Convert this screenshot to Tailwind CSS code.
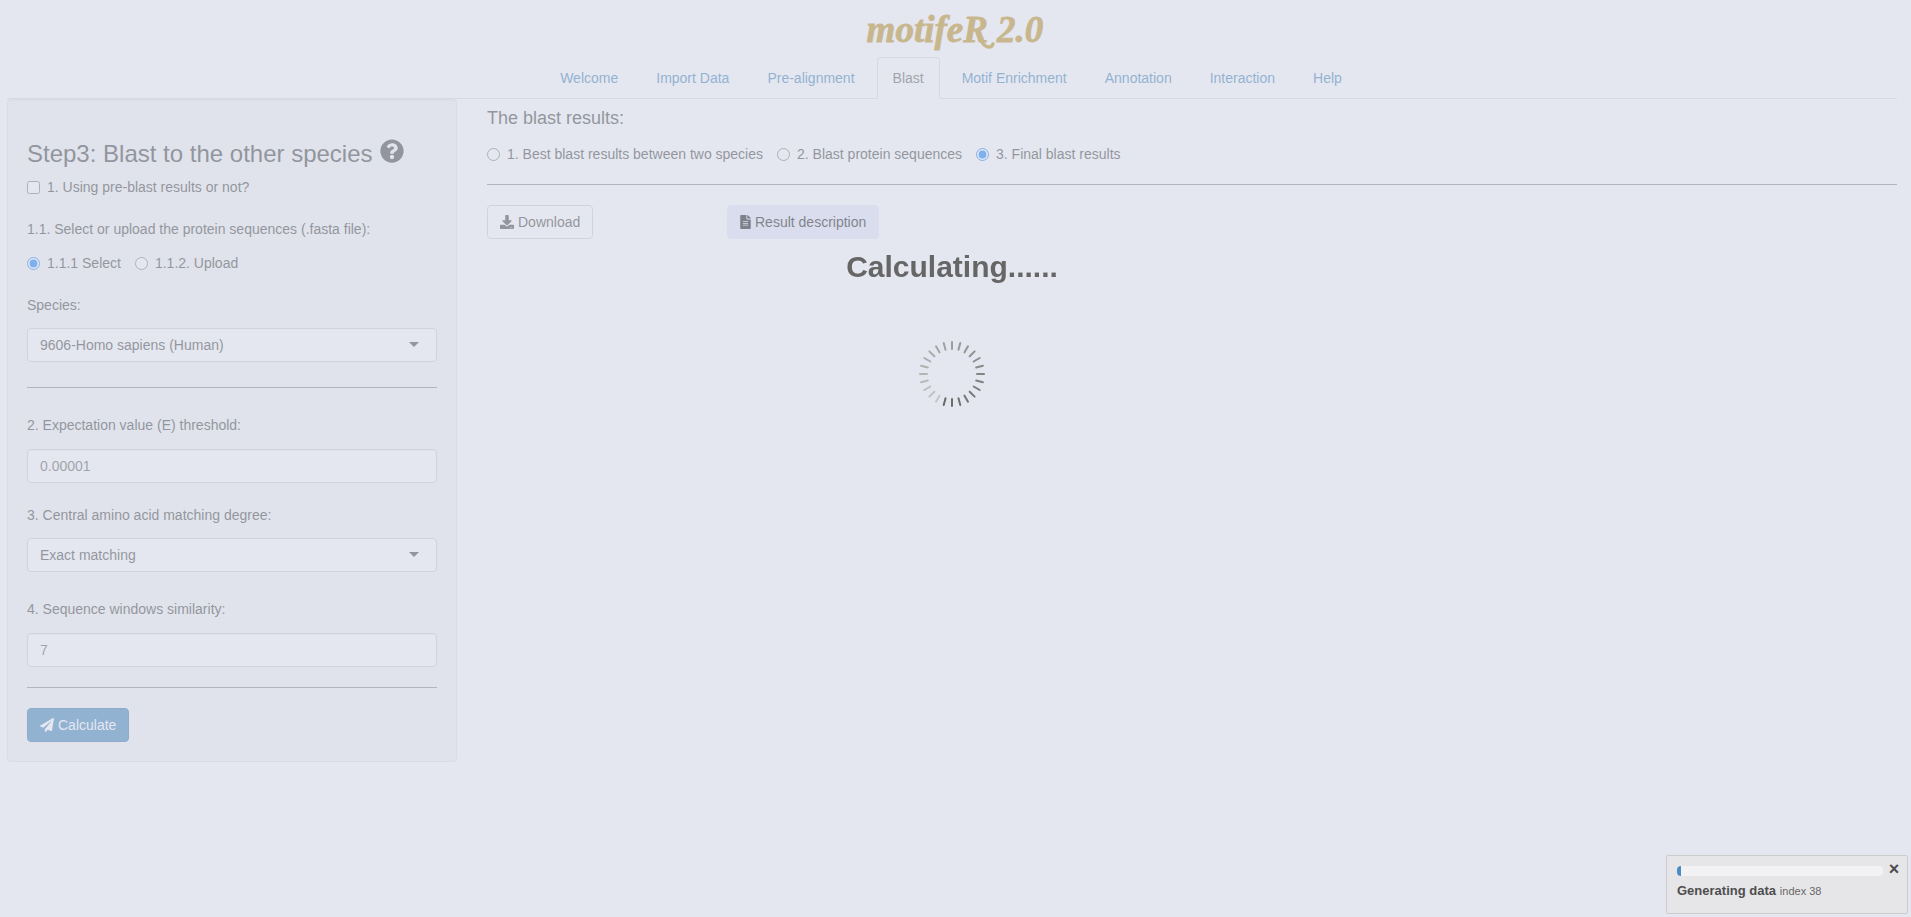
<!DOCTYPE html>
<html lang="en">
<head>
<meta charset="utf-8">
<title>motifeR 2.0</title>
<script src="https://cdn.jsdelivr.net/npm/@tailwindcss/browser@4"></script>
</head>
<body class="min-h-screen bg-white pr-3.5 pl-[7px] font-['Liberation_Sans',Arial,sans-serif] text-sm leading-5 text-[#333]">
<header class="pt-2">
  <h1 class="flex h-[49px] justify-center">
    <svg class="h-[49px] w-[190px]" viewBox="0 0 190 49" role="img" aria-label="motifeR 2.0">
      <text x="98" y="34" text-anchor="middle" fill="#b8860b" stroke="#b8860b" stroke-width="0.8" font-family="'Liberation Serif',serif" font-size="37" font-style="italic" font-weight="700">motifeR 2.0</text>
      <path d="M121 25C124 32 126 39 132 39Q135 39 136 36" fill="none" stroke="#b8860b" stroke-width="3.500" stroke-linecap="round"/>
    </svg>
  </h1>
  <nav class="flex justify-center gap-1.5 border-b border-[#ddd] pr-0.5 text-[#337ab7]">
    <a href="#" class="-mb-px border border-transparent px-[15px] py-2.5">Welcome</a>
    <a href="#" class="-mb-px border border-transparent px-[15px] py-2.5">Import Data</a>
    <a href="#" class="-mb-px border border-transparent px-[15px] py-2.5">Pre-alignment</a>
    <a href="#" class="-mb-px rounded-t border border-[#ddd] border-b-white bg-white px-[15px] py-2.5 text-[#555]">Blast</a>
    <a href="#" class="-mb-px border border-transparent px-[15px] py-2.5">Motif Enrichment</a>
    <a href="#" class="-mb-px border border-transparent px-[15px] py-2.5">Annotation</a>
    <a href="#" class="-mb-px border border-transparent px-[15px] py-2.5">Interaction</a>
    <a href="#" class="-mb-px border border-transparent px-[15px] py-2.5">Help</a>
  </nav>
</header>

<main class="flex gap-[30px]">
  <form class="w-[450px] shrink-0 rounded border border-[#e3e3e3] bg-[#f5f5f5] p-[19px] inset-shadow-2xs">
    <h2 class="mt-[22px] flex gap-[7px] text-2xl leading-[26px]">Step3: Blast to the other species
      <svg class="-mt-0.5 size-6" viewBox="0 0 512 512" fill="currentColor" aria-hidden="true"><path d="M504 256c0 136.997-111.043 248-248 248S8 392.997 8 256C8 119.083 119.043 8 256 8s248 111.083 248 248zM262.655 90c-54.497 0-89.255 22.957-116.549 63.758-3.536 5.286-2.353 12.415 2.715 16.258l34.699 26.31c5.205 3.947 12.621 3.008 16.665-2.122 17.864-22.658 30.113-35.797 57.303-35.797 20.429 0 45.698 13.148 45.698 32.958 0 14.976-12.363 22.667-32.534 33.976C247.128 238.528 216 254.941 216 296v4c0 6.627 5.373 12 12 12h56c6.627 0 12-5.373 12-12v-1.333c0-28.462 83.186-29.647 83.186-106.667 0-58.002-60.165-102-116.531-102zM256 338c-25.365 0-46 20.635-46 46 0 25.364 20.635 46 46 46s46-20.636 46-46c0-25.365-20.635-46-46-46z"/></svg>
    </h2>
    <label class="mt-2.5 flex items-center gap-[7px]"><input type="checkbox" class="size-[13px]">1. Using pre-blast results or not?</label>
    <fieldset class="mt-[22px]">
      <legend>1.1. Select or upload the protein sequences (.fasta file):</legend>
      <div class="mt-3.5 flex gap-3.5">
        <label class="flex items-center gap-[7px]"><input type="radio" name="source" checked class="size-[13px]">1.1.1 Select</label>
        <label class="flex items-center gap-[7px]"><input type="radio" name="source" class="size-[13px]">1.1.2. Upload</label>
      </div>
    </fieldset>
    <label for="species" class="mt-[22px] block">Species:</label>
    <div class="relative mt-[13px]">
      <select id="species" class="block h-[34px] w-full appearance-none rounded border border-[#ccc] bg-white px-3"><option>9606-Homo sapiens (Human)</option></select>
      <svg class="pointer-events-none absolute top-3.5 right-[18px] h-[5px] w-2.5" viewBox="0 0 10 5" aria-hidden="true"><path fill="#333" d="M0 0h10L5 5z"/></svg>
    </div>
    <hr class="mt-[25px] border-[#808080]">
    <label for="evalue" class="mt-[27px] block">2. Expectation value (E) threshold:</label>
    <input id="evalue" type="text" value="0.00001" class="mt-3.5 block h-[34px] w-full rounded border border-[#ccc] bg-white px-3 text-[#555] inset-shadow-2xs">
    <label for="degree" class="mt-[22px] block">3. Central amino acid matching degree:</label>
    <div class="relative mt-[13px]">
      <select id="degree" class="block h-[34px] w-full appearance-none rounded border border-[#ccc] bg-white px-3"><option>Exact matching</option></select>
      <svg class="pointer-events-none absolute top-3.5 right-[18px] h-[5px] w-2.5" viewBox="0 0 10 5" aria-hidden="true"><path fill="#333" d="M0 0h10L5 5z"/></svg>
    </div>
    <label for="similarity" class="mt-[27px] block">4. Sequence windows similarity:</label>
    <input id="similarity" type="text" value="7" class="mt-3.5 block h-[34px] w-full rounded border border-[#ccc] bg-white px-3 text-[#555] inset-shadow-2xs">
    <hr class="mt-5 border-[#808080]">
    <button type="button" class="mt-5 flex h-[34px] items-center gap-1 rounded border border-[#2e6da4] bg-[#337ab7] px-3 text-white">
      <svg class="size-3.5" viewBox="0 0 512 512" fill="currentColor" aria-hidden="true"><path d="M476 3.2L12.500 270.600c-18.100 10.400-15.800 35.600 2.200 43.200L121 358.400l287.300-253.200c5.500-4.900 13.300 2.600 8.600 8.300L176 407v80.500c0 23.600 28.500 32.900 42.500 15.800L282 426l124.600 52.200c14.200 6 30.400-2.900 33-18.200l72-432C515 7.800 493.300-6.800 476 3.200z"/></svg>
      Calculate
    </button>
  </form>

  <section class="min-w-0 flex-1 pt-[9px]">
    <fieldset>
      <legend class="text-lg leading-5">The blast results:</legend>
      <div class="mt-4 flex gap-3.5">
        <label class="flex items-center gap-[7px]"><input type="radio" name="result" class="size-[13px]">1. Best blast results between two species</label>
        <label class="flex items-center gap-[7px]"><input type="radio" name="result" class="size-[13px]">2. Blast protein sequences</label>
        <label class="flex items-center gap-[7px]"><input type="radio" name="result" checked class="size-[13px]">3. Final blast results</label>
      </div>
    </fieldset>
    <hr class="mt-5 border-[#808080]">
    <div class="mt-5 flex">
      <div class="w-60">
        <button type="button" class="flex h-[34px] items-center gap-1 rounded border border-[#ccc] bg-white px-3">
          <svg class="size-3.5" viewBox="0 0 512 512" fill="currentColor" aria-hidden="true"><path d="M216 0h80c13.300 0 24 10.700 24 24v168h87.700c17.800 0 26.700 21.500 14.100 34.100L269.700 378.300c-7.500 7.500-19.800 7.500-27.300 0L90.100 226.100c-12.600-12.600-3.700-34.100 14.100-34.100H192V24c0-13.300 10.700-24 24-24zm296 376v112c0 13.300-10.700 24-24 24H24c-13.300 0-24-10.700-24-24V376c0-13.300 10.700-24 24-24h146.700l49 49c20.100 20.100 52.500 20.100 72.600 0l49-49H488c13.300 0 24 10.700 24 24zm-124 88c0-11-9-20-20-20s-20 9-20 20 9 20 20 20 20-9 20-20zm64 0c0-11-9-20-20-20s-20 9-20 20 9 20 20 20 20-9 20-20z"/></svg>
          Download
        </button>
      </div>
      <button type="button" class="flex h-[34px] items-center gap-1 rounded border border-[#e6e6fa] bg-[#e6e6fa] px-3 text-black">
        <svg class="h-3.5 w-[11px]" viewBox="0 0 384 512" fill="currentColor" aria-hidden="true"><path d="M224 136V0H24C10.700 0 0 10.700 0 24v464c0 13.300 10.700 24 24 24h336c13.300 0 24-10.700 24-24V160H248c-13.200 0-24-10.800-24-24zm64 236c0 6.600-5.400 12-12 12H108c-6.600 0-12-5.400-12-12v-8c0-6.600 5.400-12 12-12h168c6.600 0 12 5.400 12 12v8zm0-64c0 6.600-5.400 12-12 12H108c-6.600 0-12-5.400-12-12v-8c0-6.600 5.400-12 12-12h168c6.600 0 12 5.400 12 12v8zm0-72v8c0 6.600-5.400 12-12 12H108c-6.600 0-12-5.400-12-12v-8c0-6.600 5.400-12 12-12h168c6.600 0 12 5.400 12 12zm96-114.100v6.100H256V0h6.100c6.400 0 12.500 2.500 17 7l97.900 98c4.500 4.500 7 10.600 7 16.900z"/></svg>
        Result description
      </button>
    </div>
  </section>
</main>

<!-- Busy overlay -->
<div class="fixed inset-0 flex flex-col items-center bg-[#d2d7e4]/60 pt-[249px] pr-3.5 pl-[7px]" role="status">
  <p class="text-3xl font-bold text-[#666]">Calculating......</p>
  <svg class="mt-[55px] size-[68px]" viewBox="-34 -34 68 68" stroke-width="2" stroke-linecap="round" aria-hidden="true">
    <g id="ticks"></g>
  </svg>
</div>

<!-- Progress notification -->
<aside class="fixed right-[3px] bottom-[3px] w-[242px] rounded-xs border border-[#ccc] bg-[#e6e6e8] px-2.5 pt-2.5 pb-3 text-[#4d4d4f]">
  <div class="flex items-start gap-1">
    <div class="h-2.5 flex-1 overflow-hidden rounded bg-[#f2f2f4]" role="progressbar" aria-label="Generating data" aria-valuenow="2" aria-valuemin="0" aria-valuemax="100">
      <div class="h-full bg-[#4a8bc4]" style="width:2%"></div>
    </div>
    <button type="button" aria-label="Close" class="-mt-1 -mr-1 flex h-3.5 w-3.5 items-center justify-center text-lg leading-3.5 font-bold">×</button>
  </div>
  <p class="mt-1 leading-5"><span class="text-[13px] font-bold">Generating data</span> <span class="text-[11px] text-[#666]">index 38</span></p>
</aside>

<script>
  // 24 ticks, fading anticlockwise from the one just past the bottom.
  const group = document.getElementById('ticks');
  for (let i = 0; i < 24; i++) {
    const line = document.createElementNS('http://www.w3.org/2000/svg', 'line');
    const level = Math.round(105 + i * 4);
    line.setAttribute('y1', -25);
    line.setAttribute('y2', -32);
    line.setAttribute('stroke', `rgb(${level},${level},${level})`);
    line.setAttribute('transform', `rotate(${195 - i * 15})`);
    group.appendChild(line);
  }
</script>
</body>
</html>
